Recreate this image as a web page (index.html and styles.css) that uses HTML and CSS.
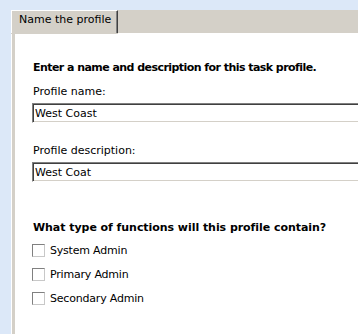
FILE: index.html
```html
<!DOCTYPE html>
<html lang="en">
<head>
  <meta charset="UTF-8">
  <title>Task profile</title>
  <link rel="stylesheet" href="styles.css">
</head>
<body>
  <div class="tabctl">
    <div class="tabstrip">
      <div class="tab">Name the profile</div>
      <div class="tab-fill"></div>
    </div>
    <div class="page">
      <div class="page-inner">
        <div class="heading heading-tight">Enter a name and description for this task profile.</div>
        <label class="field-label" for="name">Profile name:</label>
        <input type="text" id="name" class="field" value="West Coast">
        <label class="field-label field-label-next" for="desc">Profile description:</label>
        <input type="text" id="desc" class="field" value="West Coat">

        <div class="heading heading-next">What type of functions will this profile contain?</div>
        <div class="checks">
          <label class="check"><span class="box"></span>System Admin</label>
          <label class="check"><span class="box"></span>Primary Admin</label>
          <label class="check"><span class="box"></span>Secondary Admin</label>
        </div>
      </div>
    </div>
  </div>
</body>
</html>
```

FILE: styles.css
```css
html, body { margin: 0; height: 100%; overflow: hidden; }
body {
  background: #dce8f8;
  font-family: 'DejaVu Sans', Verdana, sans-serif;
  font-size: 11px;
  line-height: 13px;
  color: #000;
}
.tabctl { margin: 10px 0 0 11px; }
.tabstrip { display: flex; height: 24px; background: #d4d0c8; }
.tab {
  width: 107px; height: 23px; box-sizing: border-box;
  border-top: 1px solid #fff; border-left: 1px solid #fff; border-right: 1px solid #404040;
  box-shadow: inset -1px 0 #808080;
  padding-left: 7px;
  line-height: 18px;
  background: #d4d0c8;
}
.tab-fill { flex: 1; border-bottom: 1px solid #fff; }
.page { border-left: 1px solid #fff; background: #d4d0c8; padding-left: 3px; height: calc(100vh - 34px); }
.page-inner { background: #fff; height: 100%; padding: 27px 0 0 17px; box-sizing: border-box; }
.heading { font-weight: bold; padding-left: 1px; letter-spacing: -0.05px; }
.heading-tight { letter-spacing: -0.55px; }
.heading-next { margin-top: 39px; }
.field-label { display: block; margin-top: 11px; padding-left: 1px; }
.field-label-next { margin-top: 21px; }
.field {
  display: block; margin: 5px 0 0 0; width: 100%; height: 20px; box-sizing: border-box;
  border: 1px solid; border-color: #808080 #fff #fff #808080; border-right: 0;
  box-shadow: inset 1px 1px #404040, inset 0 -1px #d4d0c8;
  padding: 1px 0 0 2px;
  font: inherit; color: #000; background: #fff; outline: none;
}
.checks { display: flex; flex-direction: column; gap: 11px; margin-top: 10px; }
.check { display: flex; align-items: center; gap: 5px; height: 13px; letter-spacing: -0.2px; }
.box {
  width: 13px; height: 13px; box-sizing: border-box; flex: none;
  border: 1px solid; border-color: #808080 #c8c8c8 #c8c8c8 #808080;
  background: #fff;
}
```
